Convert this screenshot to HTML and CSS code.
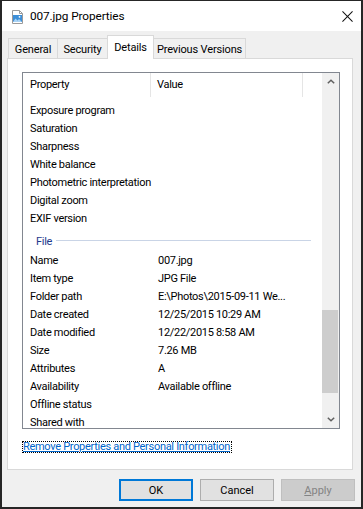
FILE: index.html
```html
<!DOCTYPE html>
<html>
<head>
<meta charset="utf-8">
<link rel="stylesheet" href="styles.css">
</head>
<body>
<div class="window">
  <div class="titlebar">
    <svg class="file-icon" width="16" height="16" viewBox="0 0 16 16">
      <path d="M3.5 1.5 H10.5 L13.5 4.5 V14.5 H3.5 Z" fill="#ffffff" stroke="#9a9a9a"/>
      <path d="M10.5 1.5 V4.5 H13.5" fill="none" stroke="#9a9a9a"/>
      <rect x="4" y="6" width="9" height="7" fill="#3d8fd8"/>
      <path d="M4 13 L6.5 9.5 L8.5 11.5 L10 10 L13 13 Z" fill="#a9d3f5"/>
      <circle cx="10.5" cy="7.8" r="0.9" fill="#ffffff"/>
    </svg>
    <span class="title">007.jpg Properties</span>
    <svg class="close" width="12" height="12" viewBox="0 0 12 12">
      <path d="M0.5 0.5 L11.5 11.5 M11.5 0.5 L0.5 11.5" stroke="#111" stroke-width="1.1" fill="none"/>
    </svg>
  </div>
  <div class="content">
    <div class="tabs">
      <div class="tab t-general">General</div>
      <div class="tab t-security">Security</div>
      <div class="tab t-details active">Details</div>
      <div class="tab t-prev">Previous Versions</div>
    </div>
    <div class="panel">
      <div class="listbox">
        <div class="list-main">
          <div class="header">
            <div class="hcell c-prop">Property</div>
            <div class="hcell c-val">Value</div>
            <div class="hcell c-rest"></div>
          </div>
          <div class="rows">
            <div class="row"><div class="cell c-prop">Exposure program</div><div class="cell c-val"></div></div>
            <div class="row"><div class="cell c-prop">Saturation</div><div class="cell c-val"></div></div>
            <div class="row"><div class="cell c-prop">Sharpness</div><div class="cell c-val"></div></div>
            <div class="row"><div class="cell c-prop">White balance</div><div class="cell c-val"></div></div>
            <div class="row"><div class="cell c-prop">Photometric interpretation</div><div class="cell c-val"></div></div>
            <div class="row"><div class="cell c-prop">Digital zoom</div><div class="cell c-val"></div></div>
            <div class="row"><div class="cell c-prop">EXIF version</div><div class="cell c-val"></div></div>
            <div class="group"><span class="group-name">File</span><span class="group-line"></span></div>
            <div class="row"><div class="cell c-prop">Name</div><div class="cell c-val">007.jpg</div></div>
            <div class="row"><div class="cell c-prop">Item type</div><div class="cell c-val">JPG File</div></div>
            <div class="row"><div class="cell c-prop">Folder path</div><div class="cell c-val">E:\Photos\2015-09-11 We...</div></div>
            <div class="row"><div class="cell c-prop">Date created</div><div class="cell c-val">12/25/2015 10:29 AM</div></div>
            <div class="row"><div class="cell c-prop">Date modified</div><div class="cell c-val">12/22/2015 8:58 AM</div></div>
            <div class="row"><div class="cell c-prop">Size</div><div class="cell c-val">7.26 MB</div></div>
            <div class="row"><div class="cell c-prop">Attributes</div><div class="cell c-val">A</div></div>
            <div class="row"><div class="cell c-prop">Availability</div><div class="cell c-val">Available offline</div></div>
            <div class="row"><div class="cell c-prop">Offline status</div><div class="cell c-val"></div></div>
            <div class="row"><div class="cell c-prop">Shared with</div><div class="cell c-val"></div></div>
          </div>
        </div>
        <div class="scrollbar">
          <div class="sb-btn">
            <svg width="8" height="5" viewBox="0 0 8 5"><path d="M0.8 4.3 L4 1.2 L7.2 4.3" stroke="#606060" stroke-width="1.5" fill="none"/></svg>
          </div>
          <div class="sb-track">
            <div class="sb-thumb"></div>
          </div>
          <div class="sb-btn">
            <svg width="8" height="5" viewBox="0 0 8 5"><path d="M0.8 0.7 L4 3.8 L7.2 0.7" stroke="#606060" stroke-width="1.5" fill="none"/></svg>
          </div>
        </div>
      </div>
      <div class="link-row"><a class="link">Remove Properties and Personal Information</a></div>
    </div>
    <div class="buttons">
      <div class="btn btn-default">OK</div>
      <div class="btn">Cancel</div>
      <div class="btn btn-disabled"><span class="ul">A</span>pply</div>
    </div>
  </div>
</div>
</body>
</html>
```

FILE: styles.css
```css
* { box-sizing: border-box; }
html, body { margin: 0; padding: 0; background: #f0f0f0; }
body {
  font-family: Roboto, "Liberation Sans", sans-serif;
  font-size: 11px;
  letter-spacing: -0.3px;
  color: #000;
}
.window {
  width: 363px;
  height: 509px;
  border-style: solid;
  border-color: #262626;
  border-width: 1px 2px 2px 2px;
  background: #f0f0f0;
  display: flex;
  flex-direction: column;
}
.titlebar {
  height: 30px;
  background: #ffffff;
  display: flex;
  align-items: center;
  flex: none;
}
.file-icon { margin-left: 7px; margin-top: 1px; flex: none; }
.title {
  margin-left: 5px;
  font-size: 11.8px;
  letter-spacing: -0.1px;
  color: #000;
  flex: 1;
}
.close { margin-right: 8px; flex: none; width: 11px; height: 11px; }

.content {
  flex: 1;
  display: flex;
  flex-direction: column;
}
.tabs {
  margin-top: 4px;
  height: 23px;
  display: flex;
  align-items: flex-end;
  padding-left: 6px;
  flex: none;
  letter-spacing: -0.15px;
}
.tab {
  height: 20px;
  border: 1px solid #d9d9d9;
  border-bottom: none;
  background: #f0f0f0;
  display: flex;
  align-items: center;
  justify-content: center;
  margin-left: -1px;
  padding-top: 1px;
}
.t-general { margin-left: 0; width: 50px; }
.t-security { width: 51px; }
.t-details { width: 47px; }
.t-prev { width: 93px; }
.tab.active {
  height: 24px;
  margin-bottom: -1px;
  background: #ffffff;
  position: relative;
  z-index: 1;
  padding-top: 0;
  padding-bottom: 1px;
}
.panel {
  margin-left: 5px;
  width: 346px;
  height: 412px;
  background: #ffffff;
  border: 1px solid #d9d9d9;
  flex: none;
  padding: 13px 0 0 14px;
}
.listbox {
  width: 318px;
  height: 357px;
  border: 1px solid #828790;
  display: flex;
  overflow: hidden;
}
.list-main {
  flex: 1;
  display: flex;
  flex-direction: column;
  overflow: hidden;
}
.header {
  height: 24px;
  display: flex;
  flex: none;
}
.hcell {
  height: 24px;
  line-height: 24px;
  padding-left: 7px;
  white-space: nowrap;
}
.c-prop { width: 128px; flex: none; }
.header .c-prop { border-right: 1px solid #e5e5e5; }
.header .c-val { width: 152px; flex: none; padding-left: 6px; border-right: 1px solid #e5e5e5; }
.c-rest { flex: 1; }
.rows {
  padding-top: 4px;
  flex: 1;
  overflow: hidden;
}
.row {
  height: 18px;
  display: flex;
  align-items: center;
  white-space: nowrap;
}
.cell { padding-left: 7px; }
.row .c-val { flex: 1; }
.group {
  height: 24px;
  display: flex;
  align-items: center;
  padding-top: 4px;
}
.group-name {
  color: #1e3a8c;
  padding-left: 13px;
}
.group-line {
  flex: 1;
  height: 1px;
  background: #c9d4e6;
  margin-left: 4px;
  margin-right: 11px;
  margin-top: -1px;
}
.scrollbar {
  width: 17px;
  flex: none;
  background: #f0f0f0;
  display: flex;
  flex-direction: column;
}
.sb-btn {
  height: 17px;
  display: flex;
  align-items: center;
  justify-content: center;
  flex: none;
}
.sb-btn svg { display: block; }
.sb-track {
  flex: 1;
  padding-top: 220px;
}
.sb-thumb {
  height: 83px;
  margin-right: 1px;
  background: #cdcdcd;
}
.link-row {
  margin-top: 12px;
  display: flex;
}
.link {
  color: #0066cc;
  text-decoration: underline;
  border: 1px dotted #000;
  line-height: 10px;
  height: 12px;
  white-space: nowrap;
  padding: 0 1px 0 0;
}
.buttons {
  margin-top: 9px;
  display: flex;
  justify-content: flex-end;
  gap: 7px;
  padding-right: 6px;
  flex: none;
}
.btn {
  width: 74px;
  height: 22px;
  background: #e1e1e1;
  border: 1px solid #adadad;
  display: flex;
  align-items: center;
  justify-content: center;
  letter-spacing: 0;
}
.btn-default { border: 2px solid #0078d7; }
.btn-disabled {
  background: #cccccc;
  border-color: #bfbfbf;
  color: #838383;
}
.ul { text-decoration: underline; }
```
